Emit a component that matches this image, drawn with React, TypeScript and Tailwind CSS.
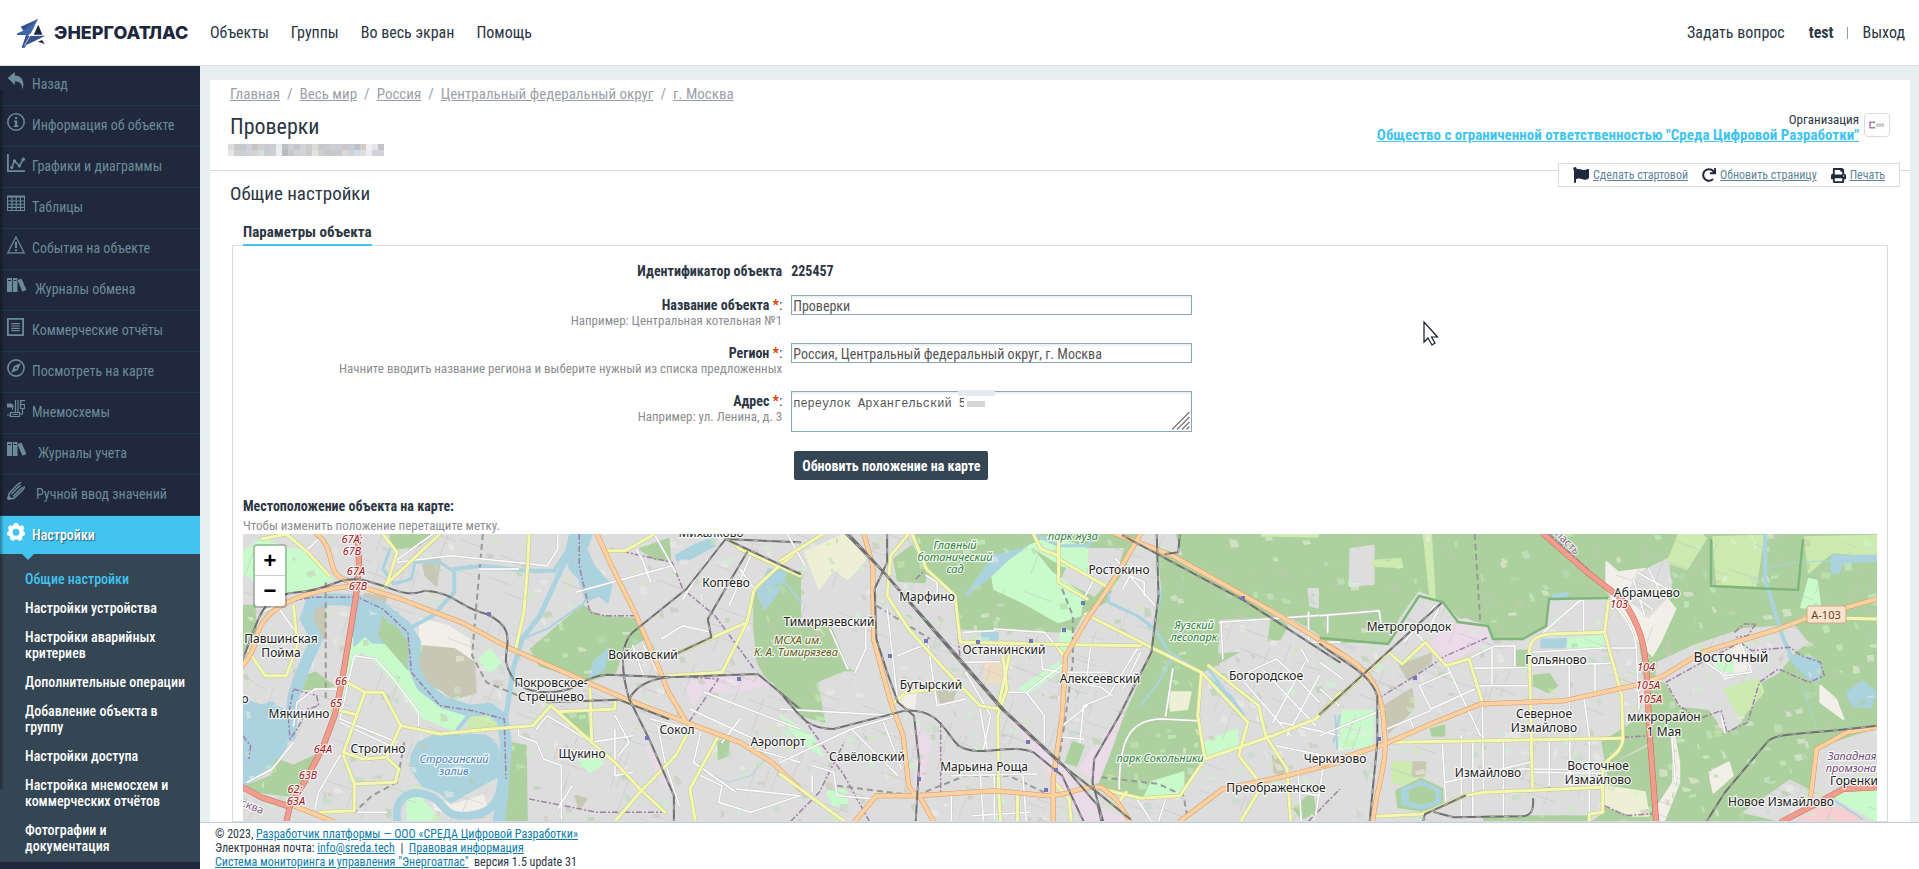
import React from "react";
import { FaFlag, FaPrint, FaRedo } from "react-icons/fa";

/* ---------- icons ---------- */

type IconProps = { children: React.ReactNode; w?: number };

function Icon({ children, w = 18 }: IconProps) {
  return (
    <svg width={w} height={18} viewBox={`0 0 ${w} 18`} fill="none" stroke="currentColor" className="shrink-0" aria-hidden="true">
      {children}
    </svg>
  );
}

const BackIcon = () => (
  <Icon>
    <path d="M.7 6 7.8 0v3.4C14 3.4 18.6 9 15.4 17.6 15.200 12 13 9.600 7.800 9.600V13z" fill="currentColor" stroke="none" />
  </Icon>
);
const InfoIcon = () => (
  <Icon>
    <circle cx="9" cy="9" r="8.200" strokeWidth="1.500" />
    <path d="M8 4h2.200v2H8zM7 7.500h3.200v5h1.200V14H6.800v-1.500H8V9H7z" fill="currentColor" stroke="none" />
  </Icon>
);
const ChartIcon = () => (
  <Icon>
    <path d="M.9 0v17.100H18" strokeWidth="1.800" />
    <path d="m4.800 13.500 2.700-6.500 5 5 4-7" strokeWidth="1.600" />
    <g fill="currentColor" stroke="none">
      <circle cx="4.800" cy="13.500" r="1.600" />
      <circle cx="7.500" cy="7" r="1.700" />
      <circle cx="12.500" cy="12" r="1.600" />
      <circle cx="16.300" cy="5.200" r="1.700" />
    </g>
  </Icon>
);
const TableIcon = () => (
  <Icon>
    <path d="M.5 1.500h17v14H.5zM.5 6h17M.5 9.200h17M.5 12.400h17M5 2v14M9.200 2v14M13.400 2v14" strokeWidth="1.100" />
    <path d="M0 .5h18v2H0z" fill="currentColor" stroke="none" />
  </Icon>
);
const AlertIcon = () => (
  <Icon>
    <path d="M9 1 17.200 16.800H.8z" strokeWidth="1.300" />
    <path d="M9 6v6M9 13.200v2" strokeWidth="2" />
  </Icon>
);
const BooksIcon = () => (
  <Icon w={20}>
    <g fill="currentColor" stroke="none">
      <path fillRule="evenodd" d="M0 1h5v14H0zM1 3v1h3V3z" />
      <path fillRule="evenodd" d="M5.800 1h4.700v14H5.800zM6.800 3v1h2.700V3z" />
      <path d="m10.500 3.200 4-1.800L19.400 13l-4 1.800z" />
    </g>
  </Icon>
);
const ReportIcon = () => (
  <Icon>
    <path d="M.9.9h15.200v16.200H.9z" strokeWidth="1.800" />
    <path d="M4.200 5.700h8.600M4.200 8h8.600M4.200 10.300h8.600M4.200 12.600h8.600" strokeWidth="1.200" />
  </Icon>
);
const CompassIcon = () => (
  <Icon>
    <circle cx="9" cy="9" r="8.100" strokeWidth="1.600" />
    <path fillRule="evenodd" d="M14 4 10.800 11 4 14l3-7zM9 7.900A1.100 1.100 0 1 0 9 10.100 1.100 1.100 0 0 0 9 7.900z" fill="currentColor" stroke="none" />
  </Icon>
);
const SchemeIcon = () => (
  <Icon>
    <path d="M0 5.500h5.500v4.500M8.500 0v12M11 0v12M18 .7h-4.300V4M13.500 4.500h4v4h-4zM15.500 9v5h-2.500M3.500 12.500h9v4h-9zM0 15h3.500" strokeWidth="1.200" />
    <path d="M0 3.500h4.500l2 2v2H0zM5.500 14h5v1h-5z" fill="currentColor" stroke="none" />
  </Icon>
);
const PencilIcon = () => (
  <Icon>
    <path d="M.8 17.200 2.200 11 10.500 2.500C12 1 13 .8 14.200.8M17.300 4.200c0 1.500-.3 2.500-1.600 3.800L7 16.200.8 17.200M4 12.200 13.500 3M6 14.500l9.500-9.200" strokeWidth="1.500" />
    <path d="M.3 17.700 1.300 13l3.900 3.800z" fill="currentColor" stroke="none" />
  </Icon>
);
const GearIcon = () => (
  <Icon>
    <path
      fillRule="evenodd"
      fill="currentColor"
      stroke="none"
      d="M7 0h4l.5 2.200 1.700.8L15.300 2 17.600 5 16.300 7l.3 1.500 1.400 1v2.500l-2.200 1-.6 1.300.2 2.200-3 1.400L10.500 16.500H8L6.400 18l-3.200-1.400.1-2.200-.8-1.400L0 12V9.300l1.600-1L2 6.800.9 4.800 3 2l2 1 1.500-.8zM9 5.700a3.500 3.500 0 1 0 0 7 3.500 3.500 0 0 0 0-7z"
    />
  </Icon>
);

function LogoMark() {
  return (
    <svg width="30" height="30" viewBox="0 0 90 90" aria-hidden="true">
      <path d="M66 3 14 26 22 38 1 51 30 51 17 89 26 89 44 58 36 53z" fill="#34528f" />
      <path d="M66 3 47 44 36 52 1 47 22 38z" fill="#3e66ad" />
      <path d="M16 88 40 54 88 53 58 68z" fill="#34528f" />
      <path d="M67 20 79 50H53z" fill="#1d2740" />
      <path d="M66 71 78 66 86 78z" fill="#1d2740" />
      <path d="M65 8 43 52 25 83" stroke="#fff" strokeWidth="2" fill="none" />
    </svg>
  );
}

/* ---------- sidebar ---------- */

const menu = [
  { label: "Назад", icon: <BackIcon />, gap: "gap-[7px]" },
  { label: "Информация об объекте", icon: <InfoIcon />, gap: "gap-[7px]" },
  { label: "Графики и диаграммы", icon: <ChartIcon />, gap: "gap-[7px]" },
  { label: "Таблицы", icon: <TableIcon />, gap: "gap-[7px]" },
  { label: "События на объекте", icon: <AlertIcon />, gap: "gap-[7px]" },
  { label: "Журналы обмена", icon: <BooksIcon />, gap: "gap-2" },
  { label: "Коммерческие отчёты", icon: <ReportIcon />, gap: "gap-[7px]" },
  { label: "Посмотреть на карте", icon: <CompassIcon />, gap: "gap-[7px]" },
  { label: "Мнемосхемы", icon: <SchemeIcon />, gap: "gap-[7px]" },
  { label: "Журналы учета", icon: <BooksIcon />, gap: "gap-[11px]" },
  { label: "Ручной ввод значений", icon: <PencilIcon />, gap: "gap-[11px]" },
];

const submenu = [
  "Общие настройки",
  "Настройки устройства",
  "Настройки аварийных критериев",
  "Дополнительные операции",
  "Добавление объекта в группу",
  "Настройки доступа",
  "Настройка мнемосхем и коммерческих отчётов",
  "Фотографии и документация",
];

function Sidebar() {
  return (
    <nav className="relative w-[200px] shrink-0 overflow-hidden bg-[#1f283c] text-sm leading-4">
      <ul className="-mt-px">
        {menu.map((m) => (
          <li key={m.label} className="h-[41px] border-b border-[#1a3845]">
            <a href="#" className={`flex items-start pt-[7px] pl-[7px] text-[#6c8b98] ${m.gap}`}>
              {m.icon}
              <span className="pt-1">{m.label}</span>
            </a>
          </li>
        ))}
      </ul>
      <a href="#" className="relative flex h-[38px] items-start gap-[7px] bg-[#41c4f0] pt-[7px] pl-[7px] font-medium text-white [text-shadow:1px_1px_1px_#2b5a78]">
        <GearIcon />
        <span className="pt-1">Настройки</span>
        <span className="absolute top-full left-[22px] border-x-[6px] border-t-[6px] border-x-transparent border-t-[#41c4f0]" />
      </a>
      <ul className="flex flex-col gap-[13px] bg-[#344553] pt-[17px] pr-3 pb-2 pl-[25px] font-medium">
        {submenu.map((s, i) => (
          <li key={s}>
            <a href="#" className={i === 0 ? "text-[#41c4f0]" : "text-white"}>
              {s}
            </a>
          </li>
        ))}
      </ul>
      <div className="pointer-events-none absolute top-6 bottom-20 left-0 w-1 bg-gradient-to-r from-black/35 to-transparent" />
    </nav>
  );
}

/* ---------- map ---------- */

type Shape = [fill: string, points: string];
type Tile = {
  transform: string;
  areas: Shape[];
  rivers: [width: number, d: string][];
  white: string[];
  yellow: string[];
  orange: string[];
  red: string[];
  rail: string[];
  metro: string[];
  border: string[];
};

const WOOD = "#add19e";
const PARK = "#c8facc";
const WATER = "#aad3df";
const BROWN = "#c7c7b4";
const PINK = "#ebdbe8";
const GRASS = "#cdebb0";
const SAND = "#f2efe9";
const CITY = "#dddddd";
const FIELD = "#eef0d5";

const west: Tile = {
  transform: "translate(-3 -5) scale(0.3571 0.3333)",
  areas: [
    [PARK, "8,70 60,30 140,60 180,60 240,130 260,150 200,180 130,190 60,170 8,130"],
    [WOOD, "8,230 40,230 45,300 8,370"],
    [WOOD, "420,15 540,15 500,50 430,60"],
    [PARK, "320,300 360,310 430,340 500,420 560,510 640,560 600,605 500,560 440,470 380,400 340,365 300,420 290,500"],
    [WATER, "318,230 440,250 470,340 430,345 370,340 350,320 320,350"],
    [WOOD, "400,260 470,320 470,420 430,370 390,320"],
    [SAND, "505,270 580,290 640,330 660,470 620,510 500,460"],
    [BROWN, "500,350 600,360 655,400 660,490 600,510 560,480 500,450"],
    [BROWN, "190,230 235,225 240,330 205,305"],
    [BROWN, "510,95 560,90 550,170 520,140"],
    [BROWN, "350,195 410,205 400,235 340,215"],
    [WATER, "500,640 540,620 620,615 690,620 720,650 725,740 690,760 640,790 590,820 560,790 510,770 480,720 480,680"],
    [WATER, "8,510 60,530 90,520 140,560 130,620 130,650 100,700 60,740 8,770"],
    [SAND, "540,800 590,830 680,800 690,830 600,860 545,840"],
    [WATER, "925,15 985,15 970,60 990,110 1040,170 1030,220 1005,200 970,215 950,150 925,120 910,80"],
    [WATER, "1220,80 1270,50 1330,25 1330,50 1260,90 1225,95"],
    [WOOD, "880,300 960,230 1000,260 1105,270 1130,330 1070,370 1050,430 960,460 900,430 840,410 815,360 860,320"],
    [WOOD, "1120,60 1200,30 1205,95 1160,90"],
    [WATER, "990,400 1030,360 1020,420 980,450"],
    [WOOD, "1440,200 1500,120 1568,130 1568,550 1510,480 1470,440 1450,400 1440,300"],
    [WATER, "1480,120 1530,130 1500,200 1470,240 1450,200"],
    [WOOD, "20,770 90,740 100,690 150,710 210,680 200,740 140,800 60,790"],
    [WOOD, "150,460 210,430 260,470 230,480 160,480"],
    [WOOD, "895,548 970,548 980,640"],
    [WOOD, "750,640 800,650 803,877 745,877"],
    [PARK, "470,810 500,800 540,850 550,877 470,877"],
    [GRASS, "640,560 700,550 735,580 730,600 640,600"],
    [PARK, "670,390 700,360 730,400 700,430"],
    [PINK, "1245,460 1430,440 1490,465 1380,490 1300,480 1270,530"],
    [PINK, "1130,640 1170,700 1200,780 1180,760"],
    [PARK, "950,690 1010,680 1015,705 980,730"],
    [BROWN, "940,800 970,810 950,840"],
    [WOOD, "1340,640 1370,620 1365,680 1340,690"],
  ],
  rivers: [
    [12, "M140,620 L150,500 L185,400 L215,330 L185,270 L200,220 L260,210 L330,215 L400,240 L460,290 L490,340 L485,410 L510,470 L570,520 L640,545 L700,540 L735,570 L745,640 L735,780 L725,877"],
    [8, "M440,877 C430,800 480,780 530,800 S560,865 640,860 S720,800 735,770"],
    [5, "M940,15 L900,120 L840,260 L790,330 L765,420 L745,560"],
    [4, "M470,300 L540,260 L600,190 L600,120 L680,110 L800,125 L880,125 L920,60"],
    [3, "M420,60 L400,120 L430,165 L480,150 L490,100 L560,100 L600,130"],
    [2, "M790,330 L860,300 L960,225 L1000,150"],
    [4, "M610,600 L640,560"],
    [1, "M1300,730 L1370,760 L1430,740 L1470,690"],
  ],
  white: [
    "M320,380 L380,390 L430,450 L500,550 L500,590 M320,380 L280,570 L440,640 M280,580 L420,650",
    "M150,590 L160,520 L210,480 L270,480 M20,760 L90,720 L150,640",
    "M280,680 L220,790 L210,840 M330,850 L410,850 M540,15 L430,100 M440,100 L590,80 L860,110 L890,60 L890,15",
    "M780,600 L780,620 L830,640 L850,690 L900,710 L900,870 M830,600 L860,560 L985,640 M985,640 L1100,620 M1050,600 L1050,740 L1100,730",
    "M940,190 L1210,110 M1160,15 L1220,130 M1310,90 L1240,210 M1430,80 L1370,230 M1400,120 L1440,180 M1180,330 L1240,290 L1320,310",
    "M1100,350 L1130,440 M1130,350 L1170,430 M1110,60 L1130,100 L1150,160 M1300,490 L1568,600 M1260,540 L1460,640 M1400,570 L1350,640",
    "M1290,610 L1270,700 L1390,790 M1290,740 L1350,770 L1340,820 L1430,850 L1568,800 M1390,780 L1568,800 M1170,590 L1190,700 L1230,830",
    "M220,30 L180,70 M60,250 L100,230 M110,240 L150,300 M670,120 L780,120 M1050,560 L1090,640 L1060,680",
    "M1150,570 L1260,600 M1440,660 L1568,700 M1060,860 L1160,740 M930,770 L890,840",
  ],
  yellow: [
    "M810,15 L805,120 L795,250 L770,370",
    "M300,460 L350,490 L400,490 L450,590 L560,615 L700,600 L820,590 L870,530 L985,640",
    "M350,490 L290,670 L345,690 L410,685 L450,590",
    "M410,685 L445,720 L435,760 L320,765 L290,680 M320,765 L320,845 L225,850 M260,540 L320,555",
    "M890,548 L1050,540 L1050,515 M980,480 L985,640 L1050,700 L1120,780 L1190,850",
    "M1260,600 L1220,680 L1120,790 L1050,877 M1340,620 L1260,780 L1275,877",
    "M1568,60 L1500,120 L1440,180 L1420,280 L1220,375 M1420,280 L1350,430 L1200,440",
    "M60,30 L130,15 M130,15 L190,70 L250,140 M400,15 L440,70 L410,170 M560,15 L400,175",
    "M20,360 L70,440 L130,440 L160,350 L150,230 M1020,65 L1080,65 L1160,15 M1360,15 L1400,60 L1568,140",
  ],
  orange: [
    "M330,170 L450,210 L620,280 L760,360 L930,440 L1090,515 L1250,580 L1400,640 L1490,700 L1568,780",
    "M1000,15 L1040,110 L1110,260 L1170,410 L1200,490 L1250,580",
    "M215,15 C270,60 240,130 290,150 L330,170",
    "M330,170 C200,180 80,220 50,310 C40,370 20,390 8,410",
    "M150,830 L260,877",
  ],
  red: [
    "M330,15 L333,100 L325,200 L310,300 L285,460 L265,560 L230,660 L180,760 L140,830 L130,877",
    "M8,775 L60,805 L130,830",
  ],
  rail: [
    "M8,390 C60,250 60,200 160,190 C260,180 260,150 330,150 C430,170 450,210 520,185 C600,190 620,240 690,255 C780,300 740,350 745,400 C760,460 790,490 860,490 C950,490 960,440 1030,437 L1200,445 L1450,435 L1568,540",
    "M1568,40 L1360,30 L1250,180 L1100,310 C1060,350 1070,440 1090,510 L1150,640 L1215,800 L1215,877",
    "M1090,510 C1110,470 1150,450 1200,445 M1360,30 L1568,135",
    "M1420,70 L1370,160 L1310,270 L1320,325 L1220,375 M860,520 L1060,512 L1200,570",
  ],
  metro: ["M240,160 L240,520", "M680,15 L660,250 L650,380 L690,460 L780,500", "M460,640 L440,760 L370,800 L320,850"],
  border: [
    "M150,480 L180,490 L215,500 L220,530 L190,540 L160,600 L140,630 L135,560 L150,480",
    "M950,15 L950,110 L980,250 L1020,260 L1110,260 M1040,60 L1210,100 L1240,180 L1330,260 L1440,420",
    "M80,230 L200,205 L330,205 L400,240 L470,310 L480,430 L560,530 L650,545 L740,570 L745,750",
    "M8,620 L30,650 L25,690 M810,810 L1000,850 L1190,850 M1200,440 L1340,450 L1250,590",
  ],
};

const centre: Tile = {
  transform: "translate(537 -5) scale(0.3571 0.3333)",
  areas: [
    [WOOD, "380,15 1010,15 960,120 910,220 850,250 820,310 640,300 510,300 490,190 410,130"],
    [CITY, "830,60 960,60 940,130 880,200 790,150"],
    [PARK, "590,110 700,50 760,130 850,200 840,260 780,280 680,220 600,180"],
    [WOOD, "320,90 370,50 410,130 405,160 330,155"],
    [WATER, "600,80 680,60 640,90 580,150 520,200 560,140"],
    [WATER, "565,310 610,312 608,332 565,332"],
    [FIELD, "70,70 180,15 240,90 190,150 150,120 110,180"],
    [WOOD, "1060,60 1120,80 1300,200 1420,290 1400,330 1330,340 1180,430 1040,370 1050,280 1070,180"],
    [WOOD, "1110,15 1568,15 1568,350 1440,270 1300,190 1130,80"],
    [CITY, "1235,275 1370,270 1360,360 1230,370"],
    [WOOD, "1040,370 1180,430 1170,560 1190,690 1120,800 1020,810 960,790 890,770 900,690 950,600 1000,480"],
    [FIELD, "1090,490 1150,490 1140,540 1095,545"],
    [WOOD, "0,290 140,290 190,420 210,430 130,580 60,560 0,490"],
    [CITY, "110,460 180,430 210,430 130,580"],
    [PINK, "640,560 780,700 900,840 980,877 850,877 760,740 700,650"],
    [PINK, "960,560 920,680 890,760 840,720 880,650"],
    [PINK, "380,570 420,640 400,760 380,780"],
    [PARK, "790,300 820,310 800,380 780,350"],
    [WOOD, "820,640 850,650 830,710 800,700"],
    [PARK, "670,480 780,400 790,420 700,490"],
    [PARK, "130,790 180,780 190,820 150,830"],
    [PARK, "1190,640 1280,600 1280,660 1200,680"],
    [PARK, "0,560 90,620 120,680 60,640"],
    ["#f2dcc0", "575,400 615,400 615,460 575,460"],
    [WOOD, "1440,840 1490,790 1500,850 1460,870"],
    [BROWN, "440,480 490,490 480,520 450,520"],
    [BROWN, "1380,680 1410,690 1410,740 1385,730"],
    [PARK, "1040,760 1130,730 1130,800 1020,805"],
    [SAND, "345,490 380,490 375,540 335,520"],
    [PARK, "700,50 760,20 860,60 860,130 790,110"],
    [CITY, "1480,180 1530,180 1525,240 1485,230"],
    [GRASS, "1350,15 1568,15 1568,24 1350,20"],
  ],
  rivers: [
    [3, "M920,180 L920,220 L1000,260 L1050,300 L1090,370 L1180,430 L1260,500 L1300,560"],
    [3, "M720,20 L780,50 L860,50 L890,20"],
    [2, "M0,140 L60,220 M1568,560 L1550,640"],
    [2, "M1050,280 L1070,180 M1010,530 L1060,460 L1100,380"],
    [3, "M1200,420 L1260,510"],
  ],
  white: [
    "M300,240 L330,520 M330,380 L410,345 M415,350 L440,530 L520,510 M515,400 L615,398 M515,310 L600,305 M730,360 L735,420 L780,430",
    "M560,540 L580,660 M520,430 L590,560 L570,660 M640,490 L690,490 L800,400 M690,490 L740,560 L740,640 M870,350 L860,440 M800,430 L920,430",
    "M1000,360 L920,500 L850,530 L840,640 M1010,370 L960,480 M780,600 L860,530 M790,625 L850,630 M810,460 L900,475 L930,500",
    "M600,300 L740,310 L780,360 M940,90 L1050,230 M960,180 L980,140 L1020,160 L1020,200 M880,150 L850,210",
    "M950,780 C950,650 970,570 1070,570 L1170,575 M1100,420 L1080,560 M140,300 L190,420 M160,290 L240,270 L240,360 L210,430",
    "M0,540 L330,560 M0,700 L200,600 L330,560 M90,710 L150,730 L160,800 L270,810 M90,740 L90,790 M200,600 L330,740 M290,580 L340,720",
    "M480,740 L720,735 M480,800 L480,877 M560,730 L570,877 M600,740 L600,870 M540,860 L700,850 M680,740 L690,877 M440,200 L440,160 L410,140",
    "M20,15 L70,110 M1460,360 L1480,400 M1230,280 L1568,255 M1235,280 L1240,390 M1480,250 L1480,340 L1568,340",
    "M1290,440 L1390,390 L1430,430 L1510,520 M1300,460 L1430,620 M1350,420 L1500,590 M1470,400 L1380,580 M1510,440 L1420,620 M1400,580 L1568,620",
    "M1390,650 L1568,690 M1390,780 L1510,800 M1450,720 L1460,877 M1520,720 L1500,860 M1000,810 L1040,877 M1080,810 L1060,877",
  ],
  yellow: [
    "M360,15 L310,80 L300,200 L360,300 L460,420 L560,530 L610,540 L650,340",
    "M620,340 L635,480 L610,560 L612,790 L618,877",
    "M510,340 L860,348 L1010,350 M855,255 L1030,350 L1180,430 L1170,560 L1190,690 L1120,800 L1010,808 L900,780",
    "M780,15 L780,160 L860,210 M780,90 L910,170 M370,15 L410,120 L490,200 L505,340 M710,15 L730,60 L780,80",
    "M0,735 L180,877 M1180,430 L1310,580 L1285,680 L1350,770 L1290,877 M1200,410 L1340,530 L1360,620 L1420,720 L1430,877",
    "M1190,690 L1380,620 L1500,570 L1568,490 M320,520 L350,490 L440,480 M0,95 L120,15",
    "M780,360 L800,390 M760,750 L810,810 L815,877 M665,790 L665,877 M970,790 L940,830",
  ],
  orange: [
    "M235,15 L260,110 L262,330 L310,520 L345,620 L360,770 L380,800 L600,785 L750,800 C820,800 830,770 900,775 L940,810 L980,877",
    "M1010,15 L930,160 L860,270 L800,380 L790,560 L765,750 L765,877",
    "M940,15 L1100,80 L1400,260 L1568,370",
    "M380,800 L270,800 L210,877 M390,800 L430,877 M1120,877 L1240,780 L1400,745 L1568,700",
  ],
  red: [],
  rail: [
    "M185,15 L290,130 L450,330 L620,540 L780,700 L900,800 L980,870",
    "M193,15 L300,140 L460,335 L630,545 L790,705 L890,830 L900,877",
    "M300,15 L300,100 L265,180 L270,330 L300,430 L330,520 L375,560 L390,700 L380,877",
    "M1055,15 L1060,200 L1040,370 L950,560 L880,690 L875,760 L905,877",
    "M0,490 C60,570 80,600 150,600 L350,545 C450,540 460,610 500,650 C560,690 640,640 710,670 L790,740 L850,877",
    "M960,20 L1300,215 L1568,400",
    "M1120,15 L1115,70 L1080,75",
  ],
  metro: ["M790,180 L820,260 L820,400 L800,560 L780,700", "M160,770 L380,800 L520,740 L640,740 L740,790", "M900,745 L1060,765 L1130,800 L1140,860", "M270,230 L420,330"],
  border: [
    "M60,560 L180,740 L250,877 M450,580 L450,790 L490,800 M380,150 L410,120 L490,200 L505,400",
    "M1480,877 L1568,780 M30,877 L110,790 L180,640",
  ],
};

const east: Tile = {
  transform: "translate(1077 -5) scale(0.382 0.3333)",
  areas: [
    [WOOD, "0,15 1470,15 1470,877 0,877"],
    [CITY, "0,345 180,345 210,270 260,190 320,220 360,270 440,290 450,330 530,330 590,300 600,210 760,210 830,330 850,470 870,640 750,710 740,850 705,877 0,877"],
    [CITY, "80,60 140,50 140,165 78,170"],
    [GRASS, "272,15 290,15 300,215 290,215"],
    [GRASS, "140,95 210,90 215,115 140,110"],
    [GRASS, "910,100 940,15 1000,15 1010,30 960,120"],
    [SAND, "750,100 780,130 850,120 930,240 890,340 870,380 830,330 750,180"],
    [CITY, "840,130 910,90 920,190 860,262 800,200"],
    [GRASS, "1030,25 1160,20 1150,100 1140,170 1040,165"],
    [GRASS, "1270,25 1458,20 1458,80 1340,70 1280,130"],
    [CITY, "885,400 980,350 1110,300 1240,290 1275,340 1240,370 1200,430 1150,460 1100,580 1060,610 1020,540 940,530 905,460 880,450"],
    [SAND, "1030,400 1100,340 1130,420 1060,450"],
    [PARK, "1280,150 1300,155 1310,240 1260,235"],
    [PARK, "1040,380 1080,380 1080,430 1040,420"],
    [GRASS, "1060,480 1150,450 1160,490 1100,570"],
    [WATER, "1225,380 1290,385 1312,410 1305,455 1280,450"],
    [WATER, "1380,490 1420,458 1455,490 1440,535 1395,530"],
    [WATER, "1340,80 1458,80 1458,95 1370,100 1355,132 1340,130"],
    [WATER, "580,332 645,330 640,355 580,355"],
    [WATER, "610,200 650,190 640,205 610,208"],
    [SAND, "1310,470 1350,510 1370,570 1310,520"],
    [SAND, "925,610 940,700 940,760 900,877 880,877 885,830 925,760"],
    [SAND, "1020,730 1070,700 1080,740 1030,790"],
    [CITY, "1300,660 1458,600 1458,877 1210,877 1290,790"],
    [CITY, "1110,850 1230,755 1290,790 1210,877"],
    [PARK, "1340,800 1458,780 1458,877 1400,840"],
    ["#f8cfd0", "1250,877 1310,830 1400,850 1420,877"],
    [FIELD, "745,770 850,790 860,860 820,860 745,830"],
    [PINK, "290,340 380,270 445,300 440,340 330,400"],
    [BROWN, "210,410 290,375 290,400 230,450"],
    [BROWN, "170,530 240,480 245,540 180,610"],
    [PARK, "60,545 140,545 135,650 50,660"],
    [GRASS, "190,700 275,700 275,740 240,770 190,760"],
    [WOOD, "515,365 550,365 550,410 515,410"],
    [PARK, "650,330 740,320 740,355 650,358"],
    [WOOD, "290,600 325,590 325,620 295,620"],
    [WOOD, "200,785 265,750 320,780 320,830 265,845 205,835"],
    [WATER, "215,780 265,757 315,785 312,825 265,840 215,825"],
    [WOOD, "235,785 265,772 300,790 298,815 265,825 235,815"],
    [BROWN, "245,700 275,700 272,740 243,740"],
    [WOOD, "560,440 600,435 620,470 600,490 560,470"],
    [WOOD, "740,640 850,560 860,640 750,710"],
    [WOOD, "430,862 700,862 700,877 430,877"],
  ],
  rivers: [
    [4, "M1165,15 L1165,150 L1210,320 L1240,400"],
    [1, "M1240,400 L1300,600 M1170,115 L1250,100 L1340,95"],
    [2, "M40,560 L45,660"],
    [2, "M1340,810 L1420,870"],
  ],
  white: [
    "M0,260 L155,245 L160,290 M20,260 L20,310 M585,310 L680,215 L690,215 L690,310 M0,480 L50,530",
    "M400,418 L550,415 M450,360 L450,470 M415,470 L550,470 M510,350 L510,410 M390,388 L455,352 L510,350 M550,410 L765,403",
    "M555,370 L740,357 L830,357 M720,405 L720,490 M652,410 L655,770 M690,500 L705,620 L705,860",
    "M332,410 L420,620 M260,470 L340,430 M260,470 L290,540 L405,480 M175,600 L290,545 M235,570 L250,610 M370,620 L370,860 M425,520 L428,780",
    "M320,640 L330,830 M400,640 L400,860 M330,760 L550,700 M520,720 L740,722 M560,730 L740,733 M765,225 C810,270 825,320 828,360 L835,540",
    "M1010,400 L1060,440 L1130,430 L1100,340 M1060,610 L1050,560 M300,230 L220,340 M250,310 L270,335 M310,240 L280,310",
    "M480,640 L480,860 M600,640 L600,770 M920,610 L930,760 M0,620 L170,540 M0,400 L60,450",
    "M820,150 L850,260 M860,120 L900,210 M830,130 L910,180 M810,190 L870,240",
  ],
  yellow: [
    "M0,555 L180,370 L215,405 L275,340 L330,410 L390,390 L425,520",
    "M556,775 L548,370 C548,330 570,320 600,315 L745,310 L755,215",
    "M745,310 L790,500 L793,630 C790,680 740,690 740,720 L740,850 L705,855 L705,877",
    "M190,640 L790,628 M150,862 L270,855 L380,800 L430,790 L740,775 M1270,265 L1458,270",
  ],
  orange: [
    "M0,340 C100,400 165,440 168,600 C180,700 150,760 138,877",
    "M0,710 L170,645 L300,580 L420,525 L640,515 L840,465 L900,440 L1000,370 L1200,300 L1270,270 L1458,210",
    "M1458,595 L1380,610 L1300,660 L1285,800",
  ],
  red: ["M585,15 L700,130 L790,210 C840,290 850,350 855,430 L862,600 L880,877", "M1458,775 L1370,780 L1290,830 L1210,877"],
  rail: [
    "M130,877 L150,640 L150,500 C130,430 60,400 0,345",
    "M1012,877 L1060,790 L1170,640 C1190,610 1250,620 1458,590",
    "M0,555 L320,220 M270,877 L275,855 L380,800 M300,850 L350,865 L530,862 C560,860 558,830 558,810",
  ],
  metro: ["M405,15 L420,290"],
  border: [
    "M905,460 L1000,400 L1100,340 L1130,365 L1230,355 L1260,380 L1310,400 L1320,440 L1280,460 L1200,420 L1150,460 L1120,580 L1065,610 L1050,545 L990,570 L940,530 L905,460",
    "M150,510 L250,440 L330,380 L440,325 M600,640 L600,780 M793,625 L862,620 M745,830 L800,860 L870,855",
    "M600,15 L720,140 L800,220 M1085,310 L1110,285 L1140,285 L1120,320 L1090,325",
  ],
};

const lineProps = { fill: "none", vectorEffect: "non-scaling-stroke", strokeLinejoin: "round", strokeLinecap: "round" } as const;

function Lines({ paths, color, width, dash }: { paths: string[]; color: string; width: number; dash?: string }) {
  return (
    <>
      {paths.map((d) => (
        <path key={d} d={d} stroke={color} strokeWidth={width} strokeDasharray={dash} {...lineProps} strokeLinecap={dash ? "butt" : "round"} />
      ))}
    </>
  );
}

/* Small blocks and side streets scattered with a fixed-seed generator. */
function scatter() {
  let seed = 7;
  const next = () => {
    seed = (seed * 16807) % 2147483647;
    return seed / 2147483647;
  };
  const tints = [PARK, GRASS, WOOD, SAND, BROWN, "#b8dec0", "#d0e8cc", SAND];
  const blocks = Array.from({ length: 900 }, () => {
    const x = Math.round(next() * 1634);
    const y = Math.round(next() * 287);
    const w = 2 + Math.round(next() * 7);
    const h = 2 + Math.round(next() * 5);
    return { fill: tints[Math.floor(next() * tints.length)], d: `M${x},${y} l${w},${Math.round(next() * 4) - 2} l${Math.round(next() * 3)},${h} l${-w},1z` };
  });
  const streets = Array.from({ length: 420 }, () => {
    const x = Math.round(next() * 1634);
    const y = Math.round(next() * 287);
    const a = (Math.floor(next() * 4) * Math.PI) / 2 + 0.35;
    const l = 12 + next() * 30;
    return `M${x},${y} l${Math.round(Math.cos(a) * l)},${Math.round(Math.sin(a) * l)}`;
  }).join(" ");
  return { blocks, streets };
}
const texture = scatter();

type Label = [text: string, x: number, y: number];
const places: Label[] = [
  ["Михалково", 468, 3], ["Коптево", 483, 53], ["Тимирязевский", 586, 92], ["Войковский", 400, 125],
  ["Покровское-", 308, 153], ["Стрешнево", 308, 167], ["Павшинская", 38, 109], ["Пойма", 38, 123],
  ["Мякинино", 56, 184], ["Строгино", 135, 219], ["Щукино", 339, 224], ["Сокол", 434, 200],
  ["Аэропорт", 535, 212], ["о", 2, 169], ["Ростокино", 876, 40], ["Марфино", 684, 67],
  ["Останкинский", 761, 120], ["Бутырский", 688, 155], ["Алексеевский", 857, 149], ["Богородское", 1023, 146],
  ["Савёловский", 624, 227], ["Марьина Роща", 741, 237], ["Преображенское", 1033, 258], ["Черкизово", 1092, 229],
  ["Метрогородок", 1166, 97], ["Абрамцево", 1404, 63], ["Гольяново", 1313, 130], ["Северное", 1301, 184],
  ["Измайлово", 1301, 198], ["микрорайон", 1421, 187], ["1 Мая", 1421, 202], ["Измайлово", 1245, 243],
  ["Восточное", 1355, 236], ["Измайлово", 1355, 250], ["Горенки", 1611, 251], ["Новое Измайлово", 1538, 272],
];
const parks: Label[] = [
  ["Главный", 712, 15], ["ботанический", 712, 27], ["сад", 712, 39], ["парк Яуза", 830, 6],
  ["Яузский", 951, 95], ["лесопарк", 951, 107], ["парк Сокольники", 917, 228],
];
const exits: Label[] = [
  ["67А;", 109, 9], ["67В", 109, 21], ["67А", 113, 41], ["67В", 115, 56], ["66", 98, 151], ["65", 93, 173],
  ["64А", 80, 219], ["63В", 65, 245], ["62;", 52, 259], ["63А", 53, 271], ["103", 1376, 74], ["104", 1403, 137],
  ["105А", 1405, 155], ["105А", 1407, 169],
];
const stations = [
  [246, 80], [496, 145], [404, 204], [683, 107], [735, 108], [788, 107], [821, 96], [840, 69], [647, 122],
  [785, 208], [813, 236], [803, 256], [676, 245], [1000, 64], [1172, 144], [1136, 205],
];

function Labels({ items, className }: { items: Label[]; className: string }) {
  return (
    <g className={className} textAnchor="middle" stroke="#ffffffcc" strokeWidth="2.500" paintOrder="stroke" strokeLinejoin="round">
      {items.map(([t, x, y]) => (
        <text key={`${t}-${x}-${y}`} x={x} y={y}>
          {t}
        </text>
      ))}
    </g>
  );
}

function CityMap() {
  const tiles = [west, centre, east];
  return (
    <svg viewBox="0 0 1634 287" className="block h-auto w-full overflow-hidden bg-[#dddddd] font-['Noto_Sans',sans-serif]" role="img" aria-label="Карта">
      {tiles.map((t) => (
        <g key={t.transform} transform={t.transform}>
          {t.areas.map(([fill, points]) => (
            <polygon key={points} points={points} fill={fill} stroke={fill} strokeWidth="6" strokeLinejoin="round" />
          ))}
        </g>
      ))}
      <g opacity="0.5">
        {texture.blocks.map((b) => (
          <path key={b.d} d={b.d} fill={b.fill} />
        ))}
      </g>
      <path d={texture.streets} stroke="#c4c4c0" strokeWidth="1" fill="none" opacity="0.5" />
      {tiles.map((t) => (
        <g key={t.transform} transform={t.transform}>
          {t.rivers.map(([w, d]) => (
            <path key={d} d={d} stroke={WATER} strokeWidth={w} {...lineProps} />
          ))}
          <Lines paths={t.border} color="#a07fa8" width={1.5} dash="6 2 2 2" />
          <Lines paths={t.metro} color="#999" width={2} dash="6 4" />
          <Lines paths={t.white} color="#c8c8c8" width={2.5} />
          <Lines paths={t.white} color="#fff" width={1.5} />
          <Lines paths={t.yellow} color="#c5c98a" width={4} />
          <Lines paths={t.yellow} color="#f4f7b0" width={3} />
          <Lines paths={t.orange} color="#d69a5e" width={5} />
          <Lines paths={t.orange} color="#fcd0a0" width={4} />
          <Lines paths={t.red} color="#c9675c" width={6} />
          <Lines paths={t.red} color="#ef9d8c" width={5} />
          <Lines paths={t.rail} color="#707070" width={2} />
          <Lines paths={t.rail} color="#b8b8b8" width={1} dash="5 9" />
        </g>
      ))}
      <path d="M1468,5 V52 L1555,56 L1560,5 M1077,104 L1145,110 1176,62 1200,68 1215,88 1245,92 1250,105 1280,105 1303,92 1306,65 1365,64" fill="none" stroke="#7fb77a" strokeWidth="2.500" />
      {stations.map(([x, y]) => (
        <rect key={`${x}-${y}`} x={x - 2} y={y - 2} width="4" height="4" fill="#7078b8" />
      ))}
      <Labels items={places} className="fill-[#222] text-[12px]" />
      <Labels items={[["Восточный", 1488, 128]]} className="fill-[#222] text-[14px]" />
      <Labels items={parks} className="fill-[#2f8240] text-[11px] italic" />
      <Labels items={[["МСХА им.", 555, 110], ["К. А. Тимирязева", 553, 122]]} className="fill-[#6a5a1c] text-[11px] italic" />
      <Labels items={[["Строгинский", 211, 229], ["залив", 211, 241]]} className="fill-[#4a80b8] text-[11px] italic" />
      <Labels items={[["Западная", 1609, 226], ["промзона", 1608, 238]]} className="fill-[#734a78] text-[11px] italic" />
      <Labels items={exits} className="fill-[#a01824] text-[11px] italic" />
      <g className="fill-[#8a6490] text-[11px]" stroke="#ffffffcc" strokeWidth="2" paintOrder="stroke" textAnchor="middle">
        <text transform="translate(8 276) rotate(22)">сква</text>
        <text transform="translate(1322 11) rotate(45)">ласть</text>
      </g>
      <rect x="1564" y="72" width="39" height="17" rx="2" fill="#f8e3cd" stroke="#d3a883" />
      <text x="1583" y="85" textAnchor="middle" className="fill-[#6a4420] text-[11px]">
        А-103
      </text>
    </svg>
  );
}

/* ---------- content ---------- */

const crumbs = ["Главная", "Весь мир", "Россия", "Центральный федеральный округ", "г. Москва"];

const mosaic = [
  "#dcdcdc #c9c9cc #c6c8d0 #d0d0d6 #c4c4c8 #cfcfcf #c8ccd2 #cdcdd2 #e8ecf0 #bfc0c4 #cbd0d4 #c4c6cc #d0d4d8 #cfcac8 #dadada #c6c8cc #c8cacf #d0d0d4 #c9ccd4 #cbc8c6 #c4ccd4 #b8c2d0 #d6cdc8 #f0f0f2 #e4e4e8 #c2c4ca".split(" "),
  "#e6e6e8 #d0cfd2 #cdced4 #cfd2d6 #dcd2d0 #d2e0dc #cbcbd0 #cfcfd4 #eceff2 #b9babe #c8c8cd #d0d0d5 #d2d4d6 #cccccf #e6e4de #cfd0d2 #c6c8cf #cbc8c8 #c8c8ce #dad8d4 #cfd2d6 #d4dce6 #dedede #ececf0 #d2d2d8 #d4d4d8".split(" "),
];

function Tool({ icon, children }: { icon: React.ReactNode; children: string }) {
  return (
    <a href="#" className="flex items-center gap-1 text-[#5f8497]">
      <span className="text-[#1f283c]">{icon}</span>
      <span className="underline">{children}</span>
    </a>
  );
}

function FieldLabel({ id, label, hint }: { id: string; label: string; hint: string }) {
  return (
    <div className="text-right">
      <label htmlFor={id} className="block text-sm leading-4 font-bold">
        {label} <span className="text-[#e03a00]">*</span>
        <span className="font-normal">:</span>
      </label>
      <p className="text-[13px] leading-4 text-[#8b8d90]">{hint}</p>
    </div>
  );
}

const inputClass =
  "block h-5 w-[401px] border border-[#87a6b8] bg-white px-px pt-px text-sm leading-4 text-[#555] shadow-[inset_0_2px_2px_#eee] outline-none";

export default function App() {
  return (
    <div className="flex h-screen flex-col overflow-hidden bg-white font-['Roboto_Condensed','Roboto',sans-serif] text-[#2c3644]">
      <header className="flex h-[66px] shrink-0 items-center border-b border-[#dbdcde] pr-[14px] pl-4 text-base">
        <a href="#" className="flex items-center gap-2">
          <LogoMark />
          <span className="w-[136px] font-['Inter',sans-serif] text-lg font-extrabold text-[#1d2740]">ЭНЕРГОАТЛАС</span>
        </a>
        <nav className="ml-5 flex gap-[22px]">
          <a href="#">Объекты</a>
          <a href="#">Группы</a>
          <a href="#">Во весь экран</a>
          <a href="#">Помощь</a>
        </nav>
        <div className="ml-auto flex items-center">
          <a href="#">Задать вопрос</a>
          <a href="#" className="ml-6 font-bold">
            test
          </a>
          <span className="mx-[14px] h-3 w-px bg-[#87a0b0]" />
          <a href="#">Выход</a>
        </div>
      </header>

      <div className="flex min-h-0 flex-1">
        <Sidebar />
        <div className="flex min-w-0 flex-1 flex-col">
          <main className="relative min-h-0 flex-1 overflow-hidden bg-[#e8f0ef] pt-[14px] pr-[9px] pl-[10px]">
            <div className="min-h-full bg-white">
              <div className="flex h-[91px] justify-between border-b border-[#dadbdd] pr-5 pl-5">
                <div>
                  <nav className="mt-[6px] flex gap-[7px] text-[15px] leading-4 text-[#9b9fa9]">
                    {crumbs.map((c, i) => (
                      <React.Fragment key={c}>
                        {i > 0 && <span>/</span>}
                        <a href="#" className="underline">
                          {c}
                        </a>
                      </React.Fragment>
                    ))}
                  </nav>
                  <h1 className="mt-[13px] text-[22px] leading-6">Проверки</h1>
                  <div className="mt-[5px] -ml-0.5 w-[156px]" aria-hidden="true">
                    {mosaic.map((row, r) => (
                      <div key={r} className="flex">
                        {row.map((c, i) => (
                          <span key={i} className="size-[6px]" style={{ backgroundColor: c }} />
                        ))}
                      </div>
                    ))}
                  </div>
                </div>
                <div className="mt-[33px] flex gap-[5px] text-right">
                  <div>
                    <div className="text-[13px] leading-[14px]">Организация</div>
                    <a href="#" className="block text-[15px] leading-4 font-bold text-[#41c4f0] underline">
                      Общество с ограниченной ответственностью "Среда Цифровой Разработки"
                    </a>
                  </div>
                  <div className="flex h-6 w-[26px] items-center justify-center rounded-sm border border-[#dadbdd]">
                    <svg width="18" height="8" viewBox="0 0 18 8" fill="none" aria-hidden="true">
                      <path d="M6.500 2.200V1.200H2v5.600h4.500v-1" stroke="#a57fae" strokeWidth="1.600" />
                      <path d="M8.500 3.200h8M8.500 5h8" stroke="#888" strokeDasharray="2 .6" />
                    </svg>
                  </div>
                </div>
              </div>

              <div className="-mt-2 flex justify-end pr-[10px]">
                <div className="flex h-6 items-center gap-[14px] border border-[#dadbdd] bg-white px-[14px] text-xs leading-[14px]">
                  <Tool icon={<FaFlag size={16} />}>Сделать стартовой</Tool>
                  <Tool icon={<FaRedo size={14} />}>Обновить страницу</Tool>
                  <Tool icon={<FaPrint size={15} />}>Печать</Tool>
                </div>
              </div>

              <section className="-mt-[5px] pr-[22px] pb-4 pl-[22px]">
                <h2 className="-ml-0.5 text-[19px] leading-6">Общие настройки</h2>
                <div className="relative mt-4 -mb-px ml-[11px] flex">
                  <button type="button" className="border-b-2 border-[#41c4f0] pb-0.5 text-[15px] leading-5 font-bold">
                    Параметры объекта
                  </button>
                </div>
                <div className="border border-[#dadbdd] px-[10px] pt-[17px]">
                  <form onSubmit={(e) => e.preventDefault()} className="grid grid-cols-[33%_1fr] gap-x-[9px]">
                    <div className="text-right text-sm leading-4 font-bold">Идентификатор объекта</div>
                    <div className="text-sm leading-4 font-bold">225457</div>

                    <div className="mt-[18px]">
                      <FieldLabel id="name" label="Название объекта" hint="Например: Центральная котельная №1" />
                    </div>
                    <div className="mt-4">
                      <input id="name" className={inputClass} defaultValue="Проверки" />
                    </div>

                    <div className="mt-4">
                      <FieldLabel id="region" label="Регион" hint="Начните вводить название региона и выберите нужный из списка предложенных" />
                    </div>
                    <div className="mt-[14px]">
                      <input id="region" className={inputClass} defaultValue="Россия, Центральный федеральный округ, г. Москва" />
                    </div>

                    <div className="mt-4">
                      <FieldLabel id="address" label="Адрес" hint="Например: ул. Ленина, д. 3" />
                    </div>
                    <div className="relative mt-[14px] w-[401px]">
                      <textarea
                        id="address"
                        className="block h-[41px] w-full resize-none border border-[#87a6b8] bg-white px-px pt-1 font-['Liberation_Mono',monospace] text-xs leading-4 text-[#555] shadow-[inset_0_2px_2px_#eee] outline-none"
                        defaultValue="переулок Архангельский 5"
                      />
                      <span className="absolute -top-px left-[167px] h-[6px] w-[37px] bg-[#e4eaed]" />
                      <span className="absolute top-[5px] left-[173px] h-3 w-2 bg-white" />
                      <span className="absolute top-[10px] left-[176px] h-[6px] w-[18px] bg-[#d6d4d4]" />
                      <svg className="absolute right-[2px] bottom-[2px]" width="18" height="18" viewBox="0 0 18 18" aria-hidden="true">
                        <path d="M0 17.500 17.500 0M5 17.500 17.500 5M10 17.500l7.500-7.500M14.500 17.500l3-3" stroke="#777" strokeWidth="1.300" />
                      </svg>
                    </div>

                    <div />
                    <div className="mt-[19px] pl-[3px]">
                      <button type="submit" className="h-[29px] rounded-xs bg-[#344553] px-2 text-sm leading-4 font-bold text-white">
                        Обновить положение на карте
                      </button>
                    </div>
                  </form>
                  <h3 className="mt-[18px] text-sm leading-4 font-bold">Местоположение объекта на карте:</h3>
                  <p className="mt-1 text-[13px] leading-4 text-[#8b8d90]">Чтобы изменить положение перетащите метку.</p>
                  <div className="relative">
                    <CityMap />
                    <div className="absolute top-[10px] left-[10px] flex flex-col rounded-sm border-2 border-black/20 bg-white bg-clip-padding font-['Liberation_Sans',sans-serif] text-[22px] leading-[30px] font-bold text-black">
                      <button type="button" aria-label="Приблизить" className="size-[30px] border-b border-[#ccc]">
                        +
                      </button>
                      <button type="button" aria-label="Отдалить" className="size-[30px]">
                        −
                      </button>
                    </div>
                  </div>
                </div>
              </section>
            </div>
            <svg className="pointer-events-none absolute top-[255px] left-[1223px]" width="16" height="25" viewBox="0 0 16 25" aria-hidden="true">
              <path d="M1 1v20l4-4 4 7 3-2-3.500-6H14.500z" fill="#fff" stroke="#111827" strokeWidth="1.200" />
            </svg>
          </main>
          <footer className="h-[47px] shrink-0 overflow-hidden border-t border-[#c3cbe0] bg-white pt-1 pl-[15px] text-xs leading-[14px] [&_a]:text-[#0f7ba6] [&_a]:underline">
            <p>
              © 2023, <a href="#">Разработчик платформы — ООО «СРЕДА Цифровой Разработки»</a>
            </p>
            <p>
              Электронная почта: <a href="#">info@sreda.tech</a> &nbsp;|&nbsp; <a href="#">Правовая информация</a>
            </p>
            <p>
              <a href="#">Система мониторинга и управления "Энергоатлас"</a>&nbsp; версия 1.5 update 31
            </p>
          </footer>
        </div>
      </div>
    </div>
  );
}
